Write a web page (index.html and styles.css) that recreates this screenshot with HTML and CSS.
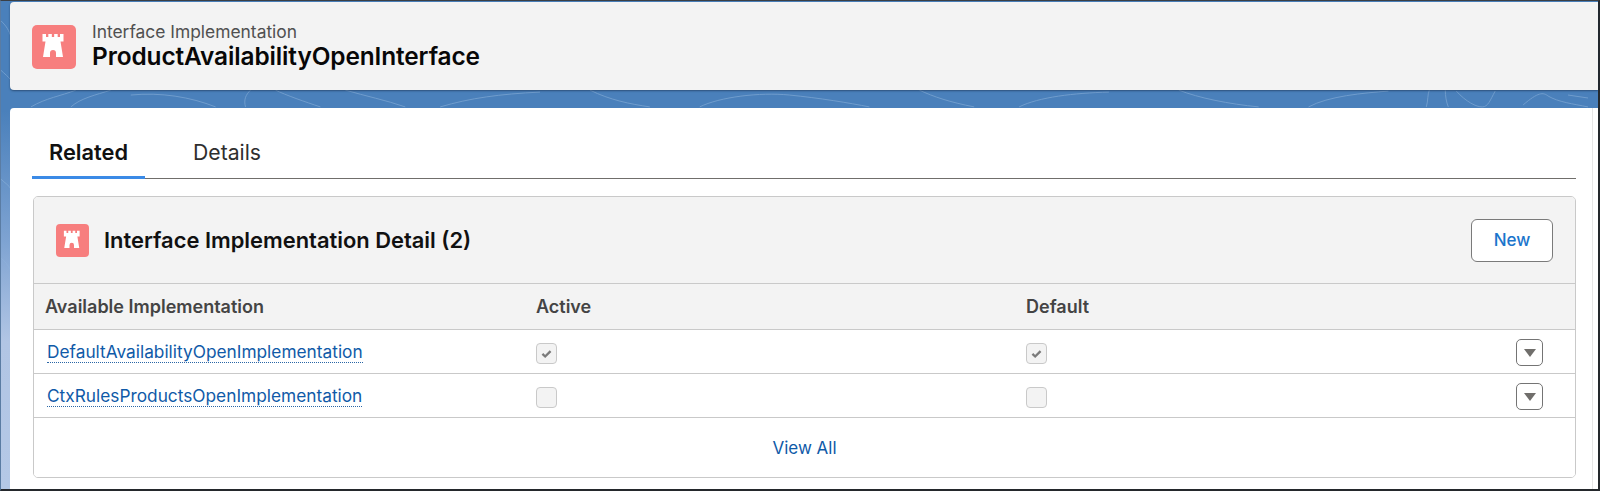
FILE: index.html
```html
<!DOCTYPE html>
<html lang="en">
<head>
<meta charset="utf-8">
<title>ProductAvailabilityOpenInterface</title>
<link rel="stylesheet" href="styles.css">
</head>
<body>
<div class="frame">
  <svg class="texture" viewBox="0 0 1600 493" preserveAspectRatio="none" aria-hidden="true">
    <g fill="none" stroke="#8fb4dc" stroke-width="1" opacity=".55">
      <path d="M30 107C45 98 60 96 75 90"/><path d="M70 107C80 98 95 95 110 90"/>
      <path d="M130 95C160 92 190 97 215 107"/><path d="M245 107C243 100 245 95 250 90"/>
      <path d="M275 90C285 95 305 102 320 107"/><path d="M345 90C365 96 385 100 405 107"/>
      <path d="M440 107C470 98 500 94 540 92"/><path d="M590 90C610 100 630 104 650 107"/>
      <path d="M700 107C720 97 760 92 790 95C820 98 850 103 870 107"/>
      <path d="M920 90C935 97 950 102 975 107"/><path d="M1020 107C1040 97 1075 93 1110 92"/>
      <path d="M1180 90C1200 98 1230 104 1260 107"/><path d="M1310 107C1330 96 1365 93 1390 91"/>
      <path d="M1428 107C1430 100 1429 95 1431 90"/><path d="M1447 90C1447 96 1448 102 1450 107"/>
      <path d="M1458 91C1468 102 1478 107 1484 107C1490 107 1492 100 1497 91"/>
      <path d="M1525 105C1540 92 1545 92 1550 96C1560 102 1575 104 1590 107"/>
      <path d="M1570 95L1590 98"/><path d="M0 20C6 26 8 30 10 36"/><path d="M0 70C4 74 7 76 10 80"/>
      <path d="M0 180C4 184 8 186 10 190"/><path d="M0 260C4 262 7 268 10 272"/>
    </g>
  </svg>
  <header class="page-header">
    <span class="icon icon-large">
      <svg viewBox="0 0 44 44" aria-hidden="true"><path class="tower" d="M10.500 9h3.500v3h2.330v-3h3.500v3h2.340v-3h3.500v3h2.330v-3h3.500v7.500h-3l2.500 15.500h-7v-4a3 3 0 0 0-6 0v4h-7l2.500-15.500h-3z"/></svg>
    </span>
    <div class="titles">
      <div class="eyebrow">Interface Implementation</div>
      <h1 class="title">ProductAvailabilityOpenInterface</h1>
    </div>
  </header>
  <main class="content">
    <nav class="tabs">
      <a class="tab tab-active">Related</a>
      <a class="tab">Details</a>
    </nav>
    <section class="card">
      <div class="card-header">
        <span class="icon icon-small">
          <svg viewBox="0 0 44 44" aria-hidden="true"><path class="tower" d="M10.500 9h3.500v3h2.330v-3h3.500v3h2.340v-3h3.500v3h2.330v-3h3.500v7.500h-3l2.500 15.500h-7v-4a3 3 0 0 0-6 0v4h-7l2.500-15.500h-3z"/></svg>
        </span>
        <h2 class="card-title">Interface Implementation Detail (2)</h2>
        <button class="new-button">New</button>
      </div>
      <div class="row row-head">
        <div class="cell">Available Implementation</div>
        <div class="cell">Active</div>
        <div class="cell">Default</div>
      </div>
      <div class="row row-body">
        <div class="cell"><a class="record-link">DefaultAvailabilityOpenImplementation</a></div>
        <div class="cell"><span class="checkbox"><svg viewBox="0 0 21 21" aria-hidden="true"><path class="tick" d="M6 11l3 2.800 6-6"/></svg></span></div>
        <div class="cell"><span class="checkbox"><svg viewBox="0 0 21 21" aria-hidden="true"><path class="tick" d="M6 11l3 2.800 6-6"/></svg></span></div>
        <div class="cell cell-action"><button class="menu-button"><svg viewBox="0 0 12 8" aria-hidden="true"><path class="caret" d="M0 0h12L6 8z"/></svg></button></div>
      </div>
      <div class="row row-body">
        <div class="cell"><a class="record-link">CtxRulesProductsOpenImplementation</a></div>
        <div class="cell"><span class="checkbox"></span></div>
        <div class="cell"><span class="checkbox"></span></div>
        <div class="cell cell-action"><button class="menu-button"><svg viewBox="0 0 12 8" aria-hidden="true"><path class="caret" d="M0 0h12L6 8z"/></svg></button></div>
      </div>
      <a class="view-all">View All</a>
    </section>
  </main>
</div>
</body>
</html>
```

FILE: styles.css
```css
* { box-sizing: border-box; }
html, body { margin: 0; height: 493px; overflow: hidden; background: #fff; }
body { font-family: Inter, "Liberation Sans", sans-serif; color: #181818; }

.frame {
  position: relative;
  height: 491px;
  padding: 1px 0 0 9px;
  border-top: 1px solid #3a3f45;
  border-right: 2px solid #24282c;
  border-bottom: 2px solid #24282c;
  border-left: 1px solid #5a7ca3;
  background: linear-gradient(180deg, #4a80bb 0, #4a80bb 110px, #7ea3d2 240px, #b1c5e4 340px, #b4c8e6 100%);
  display: flex;
  flex-direction: column;
}
.texture { position: absolute; inset: 0; width: 100%; height: 100%; }

.page-header {
  position: relative;
  height: 88px;
  background: #f3f3f3;
  border-radius: 4px 0 0 4px;
  box-shadow: 0 1px 2px rgba(20, 40, 70, .55);
  display: flex;
  align-items: center;
  padding-left: 22px;
  gap: 16px;
  flex: none;
}
.icon { display: flex; background: #f77e7e; border-radius: 5px; flex: none; }
.icon svg { width: 100%; height: 100%; }
.tower { fill: #fff; }
.icon-large { width: 44px; height: 44px; margin-top: 1px; }
.icon-small { width: 33px; height: 33px; border-radius: 4px; }

.eyebrow { font-size: 17.400px; line-height: 20px; color: #505050; }
.title { margin: 0; font-size: 24.400px; line-height: 28px; font-weight: 600; color: #080707; letter-spacing: -.1px; }

.content {
  position: relative;
  margin-top: 18px;
  flex: 1;
  background: #fff;
  border-radius: 4px 0 0 0;
  padding: 0 17px 0 23px;
  border-right: 5px solid #fff;
  box-shadow: inset -1px 0 0 #e6e6e6;
}

.tabs {
  display: flex;
  height: 71px;
  margin-left: -1px;
  align-items: stretch;
  border-bottom: 1px solid #706e6b;
}
.tab {
  height: 71px;
  padding: 28px 17px 0;
  font-size: 21.200px;
  line-height: 33px;
  color: #2e2e2e;
}
.tab-active {
  font-size: 21.800px;
  font-weight: 600;
  color: #111;
  margin-right: 31px;
  border-bottom: 3px solid #3b8ae6;
}

.card {
  margin-top: 17px;
  height: 282px;
  border: 1px solid #c9c9c9;
  border-radius: 5px;
  overflow: hidden;
  display: flex;
  flex-direction: column;
}
.card-header {
  height: 87px;
  flex: none;
  background: #f3f3f3;
  border-bottom: 1px solid #c9c9c9;
  display: flex;
  align-items: center;
  padding: 0 22px 0 22px;
  gap: 15px;
}
.card-title { margin: 0; flex: 1; font-size: 21.900px; font-weight: 600; color: #111; }
.new-button {
  width: 82px;
  height: 43px;
  background: #fff;
  border: 1px solid #7a7a7a;
  border-radius: 6px;
  color: #1b75cc;
  font: 500 17px Inter, "Liberation Sans", sans-serif;
}

.row {
  display: grid;
  grid-template-columns: 490px 490px 1fr 59px;
  align-items: center;
  border-bottom: 1px solid #c9c9c9;
  flex: none;
}
.row-head { height: 46px; background: #f3f3f3; font-size: 18px; font-weight: 600; color: #444; }
.row-head .cell:first-child { padding-left: 11px; }
.row-body { height: 44px; background: #fff; }
.cell { padding-left: 12px; display: flex; align-items: center; }
.row-body .cell:first-child { padding-left: 13px; }
.cell-action { padding-left: 0; }
.record-link {
  font-size: 17.300px;
  line-height: 20px;
  color: #0f5aa8;
  border-bottom: 1.500px dotted #2a66a6;
  margin-top: 1px;
}
.checkbox {
  display: block;
  width: 21px;
  height: 21px;
  margin-top: 4px;
  background: #f3f3f3;
  border: 1px solid #c9c9c9;
  border-radius: 4px;
}
.checkbox svg { display: block; width: 19px; height: 19px; }
.tick { fill: none; stroke: #7b7b7b; stroke-width: 2.600; }
.menu-button {
  width: 27px;
  height: 27px;
  margin-top: 2px;
  display: flex;
  align-items: center;
  justify-content: center;
  padding: 0;
  background: #fff;
  border: 1px solid #747474;
  border-radius: 5px;
}
.menu-button svg { width: 12px; height: 8px; }
.caret { fill: #706e6b; }
.view-all {
  flex: 1;
  display: flex;
  align-items: center;
  justify-content: center;
  font-size: 17px;
  color: #0f5aa8;
  background: #fff;
}
```
